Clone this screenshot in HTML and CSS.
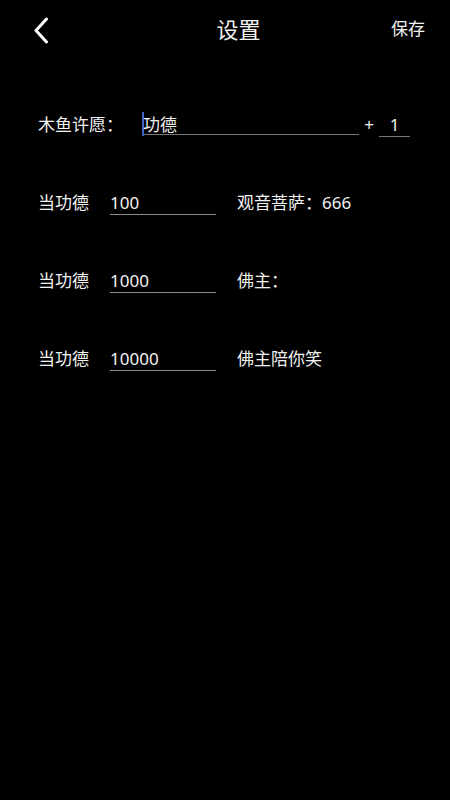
FILE: index.html
```html
<!DOCTYPE html>
<html lang="zh">
<head>
<meta charset="utf-8">
<link rel="stylesheet" href="styles.css">
</head>
<body>
<div class="app">
  <header class="header">
    <div class="back">
      <svg width="16" height="28" viewBox="0 0 16 28"><polyline points="12.5,2 2,13.5 12.5,25" fill="none" stroke="#fff" stroke-width="3" stroke-linecap="round" stroke-linejoin="round"/></svg>
    </div>
    <div class="title">设置</div>
    <div class="save">保存</div>
  </header>
  <main class="form">
    <div class="row">
      <span class="label wish-label">木鱼许愿：</span>
      <div class="field wish-field"><span class="caret"></span>功德</div>
      <span class="plus">+</span>
      <div class="field num-field">1</div>
    </div>
    <div class="row">
      <span class="label">当功德</span>
      <div class="field merit-field">100</div>
      <span class="reply">观音菩萨：666</span>
    </div>
    <div class="row">
      <span class="label">当功德</span>
      <div class="field merit-field">1000</div>
      <span class="reply">佛主：</span>
    </div>
    <div class="row">
      <span class="label">当功德</span>
      <div class="field merit-field">10000</div>
      <span class="reply">佛主陪你笑</span>
    </div>
  </main>
</div>
</body>
</html>
```

FILE: styles.css
```css
html, body {
  margin: 0;
  padding: 0;
  background: #000;
}
body {
  font-family: "Noto Sans", "Noto Sans CJK SC", sans-serif;
  color: #f2f2f2;
  width: 450px;
  height: 800px;
  overflow: hidden;
}
.header {
  height: 60px;
  display: flex;
  align-items: center;
}
.back {
  width: 60px;
  box-sizing: border-box;
  padding-left: 34px;
  display: flex;
  align-items: center;
  padding-top: 1px;
}
.title {
  flex: 1;
  text-align: center;
  padding-left: 26px;
  font-size: 22px;
  line-height: 28px;
  padding-bottom: 2px;
}
.save {
  padding-right: 25px;
  font-size: 17px;
  line-height: 24px;
  padding-bottom: 2px;
}
.form {
  padding-left: 38px;
  padding-top: 52px;
  display: flex;
  flex-direction: column;
  gap: 55px;
}
.row {
  display: flex;
  align-items: baseline;
  font-size: 17px;
  line-height: 22px;
}
.field {
  border-bottom: 1.5px solid #8a8a8a;
  height: 22px;
  white-space: nowrap;
}
.wish-label {
  width: 104px;
}
.wish-field {
  width: 217px;
  border-bottom-color: #777;
}
.caret {
  display: inline-block;
  width: 2px;
  height: 24px;
  background: #3f63c8;
  vertical-align: -5px;
  margin-right: -1px;
}
.plus {
  width: 20px;
  text-align: center;
}
.num-field {
  width: 31px;
  text-align: center;
  border-bottom-color: #777;
}
.label {
  white-space: nowrap;
}
.row .label:not(.wish-label) {
  width: 72px;
}
.merit-field {
  width: 106px;
}
.reply {
  margin-left: 21px;
  white-space: nowrap;
}
```
